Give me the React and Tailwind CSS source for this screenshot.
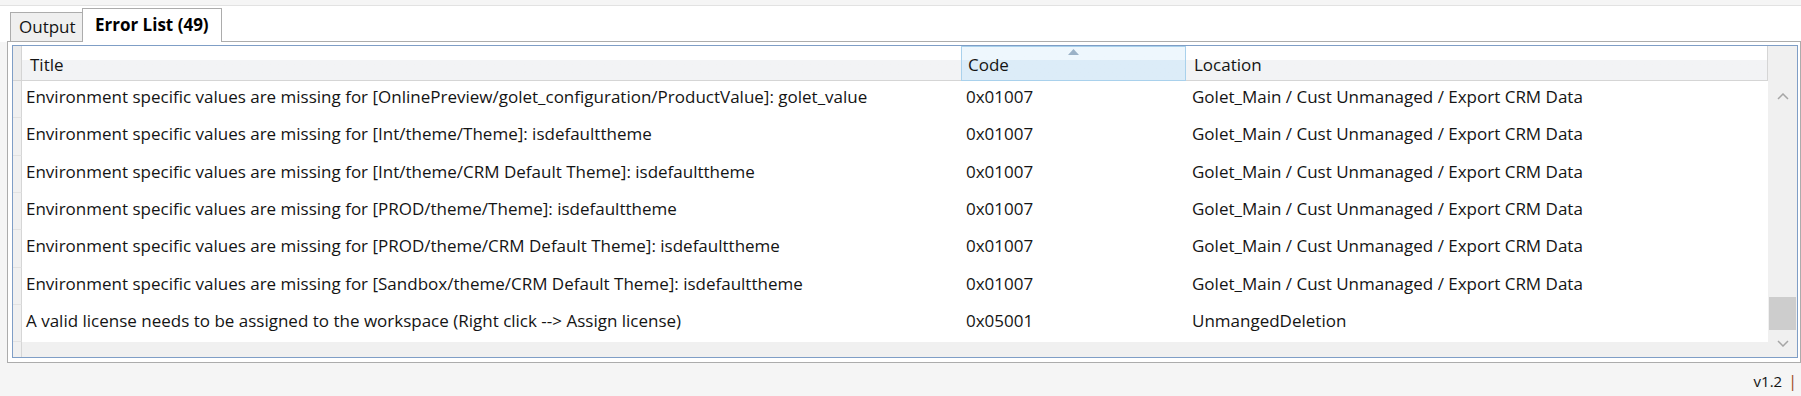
const rows = [
  ["Environment specific values are missing for [OnlinePreview/golet_configuration/ProductValue]: golet_value", "0x01007", "Golet_Main / Cust Unmanaged / Export CRM Data"],
  ["Environment specific values are missing for [Int/theme/Theme]: isdefaulttheme", "0x01007", "Golet_Main / Cust Unmanaged / Export CRM Data"],
  ["Environment specific values are missing for [Int/theme/CRM Default Theme]: isdefaulttheme", "0x01007", "Golet_Main / Cust Unmanaged / Export CRM Data"],
  ["Environment specific values are missing for [PROD/theme/Theme]: isdefaulttheme", "0x01007", "Golet_Main / Cust Unmanaged / Export CRM Data"],
  ["Environment specific values are missing for [PROD/theme/CRM Default Theme]: isdefaulttheme", "0x01007", "Golet_Main / Cust Unmanaged / Export CRM Data"],
  ["Environment specific values are missing for [Sandbox/theme/CRM Default Theme]: isdefaulttheme", "0x01007", "Golet_Main / Cust Unmanaged / Export CRM Data"],
  ["A valid license needs to be assigned to the workspace (Right click --> Assign license)", "0x05001", "UnmangedDeletion"],
];

function Chevron({ down }) {
  return (
    <svg width="12" height="7" viewBox="0 0 12 7" className="block">
      <polyline
        points={down ? "1,1 6,6 11,1" : "1,6 6,1 11,6"}
        fill="none"
        stroke="#a6a6a6"
        strokeWidth="1.5"
      />
    </svg>
  );
}

export default function App() {
  return (
    <div className="w-[1801px] h-[396px] overflow-hidden bg-[#f5f5f5] flex flex-col font-['Open_Sans',sans-serif] text-[17px] leading-[20px] text-[#141414]">
      {/* top strip */}
      <div className="h-[6px] shrink-0 border-b border-[#e2e2e2]" />

      {/* tab strip */}
      <div className="h-[36px] shrink-0 bg-white flex items-end">
        <div className="w-[7px] h-full" />
        <div className="w-[3px] h-full border-b border-[#acacac]" />
        <div className="w-[73px] h-[30px] border border-[#acacac] bg-[#efefef] flex items-center pl-[8px]">
          Output
        </div>
        <div className="w-[140px] h-[34px] -ml-px border border-b-0 border-[#acacac] bg-white flex items-center pl-[12px] pb-[2px] font-bold text-black whitespace-nowrap">
          Error List (49)
        </div>
        <div className="flex-1 h-full border-b border-[#acacac]" />
      </div>

      {/* tab panel */}
      <div className="ml-[7px] w-[1794px] h-[321px] shrink-0 border-x border-b border-[#acacac] bg-white pl-[4px] pr-[2px] pt-[3px] pb-[4px]">
        <div className="h-[313px] border border-[#7f9ec6] flex bg-[#f0f0f0]">
          {/* grid area */}
          <div className="w-[1755px] flex flex-col">
            {/* header */}
            <div className="h-[35px] shrink-0 flex">
              <div className="w-[9px] h-full bg-[#ebebeb] border-r border-[#d4d4d4] border-b" />
              <div className="w-[939px] h-full border-b border-[#d5d5d5] bg-linear-to-b from-white from-40% to-[#f2f3f5] to-40% flex items-center pl-[8px] pt-[3px]">
                Title
              </div>
              <div className="relative w-[225px] h-full border border-[#a9d1ec] bg-linear-to-b from-[#eef7fd] from-40% to-[#dcecf8] to-40% flex items-center pl-[6px] pt-[3px]">
                <svg width="11" height="6" viewBox="0 0 11 6" className="absolute left-[106px] top-[2px]">
                  <polygon points="0,6 5.5,0 11,6" fill="#9bb2c7" />
                </svg>
                Code
              </div>
              <div className="w-[582px] h-full border-b border-r border-[#d5d5d5] bg-linear-to-b from-white from-40% to-[#f2f3f5] to-40% flex items-center pl-[8px] pt-[3px]">
                Location
              </div>
            </div>

            {/* rows */}
            {rows.map((r, i) => (
              <div key={i} className="h-[37.33px] shrink-0 flex">
                <div className="w-[9px] h-full bg-[#f0f0f0] border-r border-[#d6d6d6] border-b border-b-[#e2e2e2]" />
                <div className="w-[939px] h-full bg-white flex items-center pl-[4px] pb-[5px] whitespace-nowrap">
                  {r[0]}
                </div>
                <div className="w-[225px] h-full bg-white flex items-center pl-[5px] pb-[5px]">
                  {r[1]}
                </div>
                <div className="w-[582px] h-full bg-white flex items-center pl-[6px] pb-[5px] whitespace-nowrap">
                  {r[2]}
                </div>
              </div>
            ))}

            {/* empty area */}
            <div className="flex-1 flex">
              <div className="w-[9px] h-full bg-[#f0f0f0] border-r border-[#d6d6d6]" />
              <div className="flex-1 bg-[#f0f0f0]" />
            </div>
          </div>

          {/* vertical scrollbar */}
          <div className="w-[29px] flex flex-col bg-[#f0f0f0]">
            <div className="h-[35px] shrink-0" />
            <div className="h-[30px] shrink-0 flex items-center justify-center">
              <Chevron />
            </div>
            <div className="flex-1 flex flex-col justify-end items-center">
              <div className="w-[27px] h-[33px] bg-[#cdcdcd]" />
            </div>
            <div className="h-[27px] shrink-0 flex items-center justify-center">
              <Chevron down />
            </div>
          </div>
        </div>
      </div>

      {/* status */}
      <div className="flex-1 flex justify-end items-center pt-[3px] pr-[4px] text-[15px]">
        <span>v1.2</span>
        <span className="ml-[6px] text-[16px] text-[#9c4a1a]">|</span>
      </div>
    </div>
  );
}
